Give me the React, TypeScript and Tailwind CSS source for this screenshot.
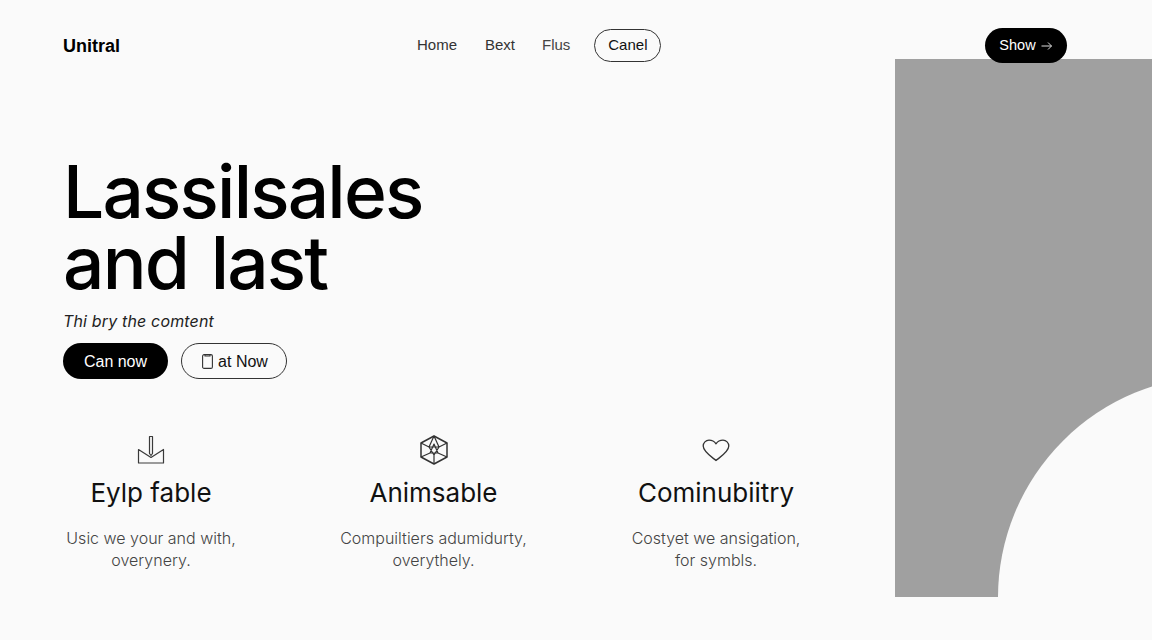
const features = [
  { title: 'Eylp fable', lines: ['Usic we your and with,', 'overynery.'], icon: <DownloadIcon /> },
  { title: 'Animsable', lines: ['Compuiltiers adumidurty,', 'overythely.'], icon: <HexIcon /> },
  { title: 'Cominubiitry', lines: ['Costyet we ansigation,', 'for symbls.'], icon: <HeartIcon /> },
];

function DownloadIcon() {
  return (
    <svg width="28" height="30" viewBox="0 0 28 30" fill="none" stroke="#3a3a3a" strokeWidth="1.2" strokeLinejoin="round">
      <path d="M12.5 1.5h3v17l-1.5 2-1.500-2z" />
      <path d="M1.500 14.500l12.500 8 12.500-8v13.500h-25z" />
    </svg>
  );
}

function HexIcon() {
  return (
    <svg width="28" height="30" viewBox="0 0 28 30" fill="none" stroke="#333" strokeWidth="1.2" strokeLinejoin="round">
      <path d="M14 1l13 7v14l-13 7-13-7V8z" strokeWidth="1.5" />
      <path d="M1 8l8 4M27 8l-8 4M14 1l-5 11M14 1l5 11M9 12h10M9 12l5 8 5-8M1 22l9-4M27 22l-9-4M14 29v-9M10 18l4-9 4 9z" />
    </svg>
  );
}

function HeartIcon() {
  return (
    <svg width="28" height="23" viewBox="0 0 28 23" fill="none" stroke="#333" strokeWidth="1.3" strokeLinejoin="round">
      <path d="M14 21.5C9 17.5 1.2 12.5 1.2 7A5.8 5.8 0 0 1 7 1.2c3 0 5.4 1.3 7 3.6 1.6-2.3 4-3.6 7-3.6A5.8 5.8 0 0 1 26.8 7c0 5.5-7.800 10.500-12.800 14.500z" />
    </svg>
  );
}

export default function App() {
  return (
    <div className="h-[640px] w-[1152px] overflow-hidden bg-[#fafafa] font-['Liberation_Sans',sans-serif] text-black">
      <header className="relative z-10 flex h-[59px] items-start pl-[63px] pr-[85px] pt-[28px]">
        <div className="flex h-[36px] w-[354px] items-center text-[18px] font-bold">Unitral</div>
        <nav className="flex h-[35px] items-center text-[15px] text-[#333]">
          <a className="mr-[28px]">Home</a>
          <a className="mr-[27px]">Bext</a>
          <a className="mr-[24px] text-[#444]">Flus</a>
          <a className="flex h-[33px] w-[67px] items-center justify-center rounded-full border border-[#333] text-[#111]">Canel</a>
        </nav>
        <button className="ml-auto flex h-[35px] w-[82px] items-center justify-center gap-[5px] rounded-full bg-black text-[14.500px] text-white">
          Show
          <svg width="12" height="10" viewBox="0 0 12 10" fill="none" stroke="#ddd" strokeWidth="1">
            <path d="M0.500 5h10M7 1.500L10.500 5 7 8.500" />
          </svg>
        </button>
      </header>

      <div className="flex h-[538px]">
        <main className="w-[895px] pl-[63px]">
          <h1 className="pt-[97px] font-['Inter',sans-serif] text-[73px] font-medium leading-[71px] tracking-[-0.025em] [word-spacing:5px]">
            Lassilsales
            <br />
            and last
          </h1>
          <p className="mt-[11px] font-['Inter',sans-serif] text-[16px] italic leading-[24px] tracking-[0.01em] text-[#222]">Thi bry the comtent</p>
          <div className="mt-[10px] flex gap-[13px]">
            <button className="h-[36px] w-[105px] rounded-full bg-black pt-[1px] text-[16px] text-white">Can now</button>
            <button className="flex h-[36px] w-[106px] items-center justify-center gap-[5px] rounded-full border border-[#333] pl-[2px] pt-[1px] text-[16px] text-[#111]">
              <svg width="11" height="15" viewBox="0 0 11 15" fill="none" stroke="#333" strokeWidth="1.1">
                <rect x="0.600" y="0.600" width="9.800" height="13.800" rx="1.500" />
                <path d="M3 0.600v1.400h5V0.600" />
              </svg>
              at Now
            </button>
          </div>

          <div className="mt-[55px] flex gap-[106.500px] font-['Inter',sans-serif]">
            {features.map((f) => (
              <div key={f.title} className="flex w-[176px] flex-col items-center text-center">
                <div className="flex h-[32px] items-center">{f.icon}</div>
                <h2 className="mt-[9px] whitespace-nowrap text-[26px] font-normal leading-[36px] text-[#111]">{f.title}</h2>
                <p className="mt-[16px] whitespace-nowrap text-[16px] font-light leading-[22px] text-[#444]">
                  {f.lines[0]}
                  <br />
                  {f.lines[1]}
                </p>
              </div>
            ))}
          </div>
        </main>

        <aside className="relative w-[257px] overflow-hidden bg-[#a0a0a0]">
          <div className="absolute left-[103px] top-[317px] h-[443px] w-[443px] rounded-full bg-[#fafafa]" />
        </aside>
      </div>
    </div>
  );
}
